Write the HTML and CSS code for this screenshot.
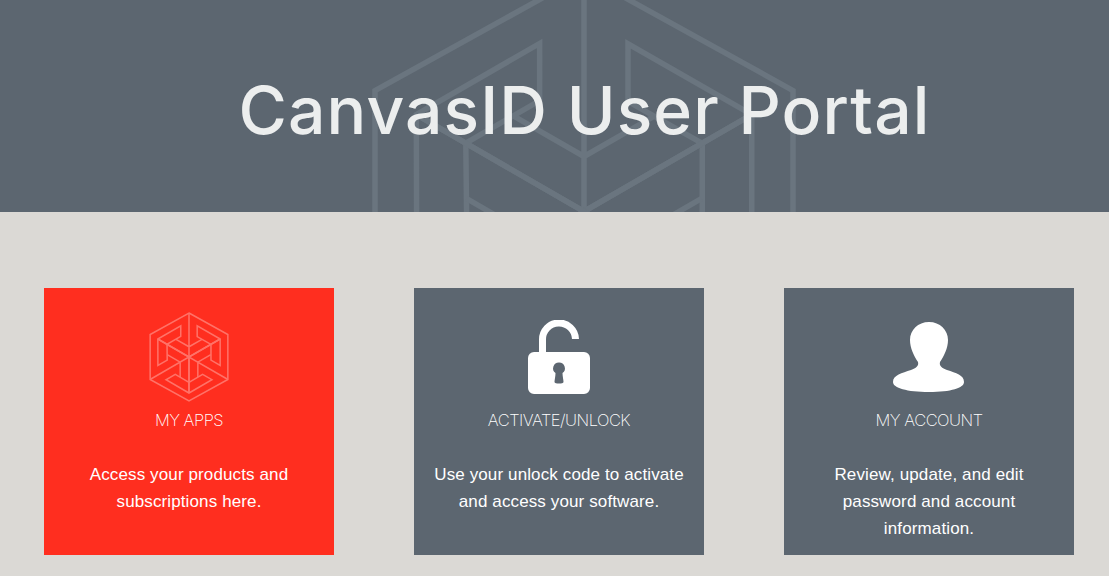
FILE: index.html
```html
<!DOCTYPE html>
<html lang="en">
<head>
  <meta charset="UTF-8">
  <title>CanvasID User Portal</title>
  <link rel="stylesheet" href="styles.css">
</head>
<body>
  <svg class="defs" width="0" height="0">
    <defs>
      <g id="arm">
        <path d="M8-20V-30.500L30.500-17.600V8.300L21.500 3.100V-12.400Z"/>
        <path d="M0-43V0L30.500-17.600M0 0-30.500-17.600M-12.700-17.300 0-10 12.700-17.300"/>
      </g>
      <g id="cube">
        <path d="M0-43 38-22V22L0 43-38 22V-22Z"/>
        <use href="#arm"/>
        <use href="#arm" transform="rotate(120)"/>
        <use href="#arm" transform="rotate(240)"/>
      </g>
    </defs>
  </svg>

  <header class="hero">
    <svg class="hero-mark" viewBox="-40 -45 80 90"><use href="#cube"/></svg>
    <h1>CanvasID User Portal</h1>
  </header>

  <main class="cards">
    <a class="card card-red">
      <div class="card-icon">
        <svg class="icon-cube" width="82" height="92" viewBox="-40 -45 80 90"><use href="#cube"/></svg>
      </div>
      <h2>MY APPS</h2>
      <p>Access your products and subscriptions here.</p>
    </a>

    <a class="card">
      <div class="card-icon">
        <svg width="62" height="74" viewBox="0 0 62 74">
          <path class="shackle" d="M14.500 33V20A16.500 16.500 0 0 1 47.500 19"/>
          <path fill="#fff" fill-rule="evenodd" d="M6 32H56A6 6 0 0 1 62 38V68A6 6 0 0 1 56 74H6A6 6 0 0 1 0 68V38A6 6 0 0 1 6 32ZM31 42.500A5.800 5.800 0 0 0 27.500 53C27.500 56 26.500 60 26.500 62C26.500 64 35.500 64 35.500 62C35.500 60 34.500 56 34.500 53A5.800 5.800 0 0 0 31 42.500Z"/>
        </svg>
      </div>
      <h2>ACTIVATE/UNLOCK</h2>
      <p>Use your unlock code to activate and access your software.</p>
    </a>

    <a class="card">
      <div class="card-icon">
        <svg width="72" height="72" viewBox="0 0 72 72">
          <path fill="#fff" d="M36 1C47 1 55 9 55 19C55 27 51 35 47 41C46 45 49 47 54 49C63 52 71 54 71 61C71 67 58 71 36 71C14 71 0 67 0 61C0 54 9 52 18 49C23 47 26 45 25 41C21 35 17 27 17 19C17 9 25 1 36 1Z"/>
        </svg>
      </div>
      <h2>MY ACCOUNT</h2>
      <p>Review, update, and edit password and account information.</p>
    </a>
  </main>
</body>
</html>
```

FILE: styles.css
```css
body {
  margin: 0;
  background: #dbd9d5;
  font-family: 'Liberation Sans', Arial, sans-serif;
  color: #fff;
}

.defs {
  position: absolute;
}

.hero {
  position: relative;
  height: 212px;
  overflow: hidden;
  background: #5c6670;
  display: flex;
  align-items: center;
  justify-content: center;
}

.hero-mark {
  position: absolute;
  left: 364px;
  top: -36px;
  width: 440px;
  height: 495px;
  fill: none;
  stroke: #6a757f;
  stroke-width: 1;
}

.hero h1 {
  position: relative;
  margin: 8px 0 0 60px;
  font-family: Inter, sans-serif;
  font-size: 66px;
  font-weight: 500;
  letter-spacing: 1.1px;
  line-height: 1;
  color: #eceeee;
}

.cards {
  display: flex;
  justify-content: space-between;
  padding: 76px 35px 21px 44px;
}

.card {
  box-sizing: border-box;
  width: 290px;
  height: 267px;
  padding: 25px 15px 0;
  background: #5c6670;
  text-align: center;
}

.card-red {
  background: #ff2e1f;
}

.card-icon {
  height: 88px;
  display: flex;
  align-items: center;
  justify-content: center;
}

.icon-cube {
  fill: none;
  stroke: #ff7268;
  stroke-width: 1.500;
}

.shackle {
  fill: none;
  stroke: #fff;
  stroke-width: 7;
}

.card h2 {
  margin: 7px 0 29px;
  font-family: Inter, sans-serif;
  font-size: 16.500px;
  font-weight: 200;
  letter-spacing: -0.5px;
  line-height: 24px;
}

.card p {
  margin: 0;
  font-size: 17px;
  letter-spacing: 0.12px;
  line-height: 27px;
}
```
